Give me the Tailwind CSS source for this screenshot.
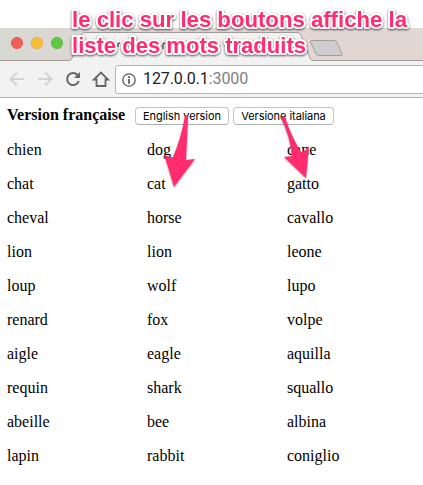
<!DOCTYPE html>
<html lang="fr">
<head>
<meta charset="utf-8">
<title>Traductions</title>
<script src="https://cdn.jsdelivr.net/npm/@tailwindcss/browser@4"></script>
</head>
<body class="bg-white">
<div class="relative flex h-[485px] w-[423px] flex-col overflow-hidden bg-white pt-[28px]">
  <header class="h-[33px] shrink-0 bg-gradient-to-r from-[#d8d8d3] to-[#e2d7d3] to-50%">
    <svg class="block" width="423" height="33" viewBox="0 0 423 33">
      <path d="M-2 32.500H69Q71 32.500 72 30L81 7Q82 4.500 85 4.500H297Q300 4.500 301 7L310 30Q311 32.500 313 32.500H425V36H-2Z" fill="#f2f2f2" stroke="#a09b98"/>
      <circle cx="17" cy="15" r="5.700" fill="#ee5f57" stroke="#d9534c" stroke-width=".7"/>
      <circle cx="37" cy="15" r="5.700" fill="#fbbd38" stroke="#dda431" stroke-width=".7"/>
      <circle cx="57" cy="15" r="5.700" fill="#60c944" stroke="#4fae37" stroke-width=".7"/>
      <path d="M118 19V16.500Q118 15 120 15.200M163 21V16.500Q163 15 165 15.200" fill="none" stroke="#333" stroke-width="1.200"/>
      <path d="M311.500 12.500H334Q336 12.500 337 14.500L342 25.500Q343 27.500 341 27.500H319Q317 27.500 316 25.500L310.500 14Q310 12.500 311.500 12.500Z" fill="#cecece" stroke="#a39e9b"/>
    </svg>
  </header>
  <nav class="flex h-[37px] shrink-0 border-b border-[#b2b2b2] bg-[#f2f2f2]">
    <svg class="block shrink-0" width="115" height="36" viewBox="0 0 115 36" fill="none">
      <path d="M24 18H11M17 11.500L10.500 18L17 24.500" stroke="#d2d2d2" stroke-width="1.800"/>
      <path d="M38 18H51M45 11.500L51.500 18L45 24.500" stroke="#d2d2d2" stroke-width="1.800"/>
      <path d="M77.500 14A6 6 0 1 0 78.800 20" stroke="#656565" stroke-width="2"/>
      <path d="M80 11V17H74Z" fill="#656565"/>
      <path d="M94 18.500L101 11.500L108 18.500H105.500V25H96.500V18.500Z" stroke="#656565" stroke-width="1.800"/>
    </svg>
    <div class="mt-[4px] flex h-[29px] w-[320px] shrink-0 items-center rounded-[3px] border border-[#b5b5b5] bg-white pl-[6px]">
      <svg class="block" width="14" height="14" viewBox="0 0 14 14"><circle cx="7" cy="7" r="6.200" fill="none" stroke="#5c5c5c" stroke-width="1.300"/><path d="M6.100 3.200H7.900V5H6.100ZM6.100 6H7.900V10.700H6.100Z" fill="#5c5c5c"/></svg>
      <p class="ml-[7px] -mt-[2px] whitespace-nowrap font-[Roboto,sans-serif] text-[16px] leading-[20px] tracking-[-0.1px] text-[#222]">127.0.0.1<span class="text-[#808080]">:3000</span></p>
    </div>
  </nav>
  <main class="pl-[7px] font-['Liberation_Serif',serif] text-[16px] leading-[18px] text-black">
    <div class="flex h-[35px] items-start pt-[8px]">
      <h1 class="w-[128px] whitespace-nowrap font-bold">Version française</h1>
      <button class="mt-[1px] h-[18px] w-[94px] whitespace-nowrap rounded-[4px] border border-[#c4c4c4] border-b-[#b0b0b0] bg-white font-[Inter,sans-serif] text-[11px] leading-[16px] tracking-[-0.05px]">English version</button>
      <button class="mt-[1px] ml-[4px] h-[18px] w-[101px] whitespace-nowrap rounded-[4px] border border-[#c4c4c4] border-b-[#b0b0b0] bg-white font-[Inter,sans-serif] text-[11px] leading-[16px] tracking-[-0.05px]">Versione italiana</button>
    </div>
    <div class="grid auto-rows-[34px] grid-cols-[140px_140px_130px] leading-[34px]">
      <p>chien</p><p>dog</p><p>cane</p>
      <p>chat</p><p>cat</p><p>gatto</p>
      <p>cheval</p><p>horse</p><p>cavallo</p>
      <p>lion</p><p>lion</p><p>leone</p>
      <p>loup</p><p>wolf</p><p>lupo</p>
      <p>renard</p><p>fox</p><p>volpe</p>
      <p>aigle</p><p>eagle</p><p>aquilla</p>
      <p>requin</p><p>shark</p><p>squallo</p>
      <p>abeille</p><p>bee</p><p>albina</p>
      <p>lapin</p><p>rabbit</p><p>coniglio</p>
    </div>
  </main>
  <svg class="pointer-events-none absolute top-0 left-0 drop-shadow-[0_1px_1px_rgba(0,0,0,0.35)]" width="423" height="485" viewBox="0 0 423 485" fill="#ff2d6f">
    <path d="M185 116Q186 114 188 116L186 160L195 159L174 187L164 154Q169 158 173 157Q181 139 185 116Z"/>
    <path d="M281 118Q282 115 285 117Q291 136 301 152Q306 151 309 146L306 178L284 157L292 156Q290 136 281 118Z"/>
  </svg>
  <svg class="pointer-events-none absolute top-0 left-0 drop-shadow-[0_1px_1px_rgba(0,0,0,0.65)]" width="423" height="64" viewBox="0 0 423 64">
    <g class="fill-[#ff2d6f] stroke-white stroke-[4px] font-['Liberation_Sans',sans-serif] text-[21.5px] font-bold [paint-order:stroke]" stroke-linejoin="round">
      <text x="72" y="27" textLength="335" lengthAdjust="spacingAndGlyphs">le clic sur les boutons affiche la</text>
      <text x="72" y="53" textLength="234" lengthAdjust="spacingAndGlyphs">liste des mots traduits</text>
    </g>
  </svg>
</div>
</body>
</html>
